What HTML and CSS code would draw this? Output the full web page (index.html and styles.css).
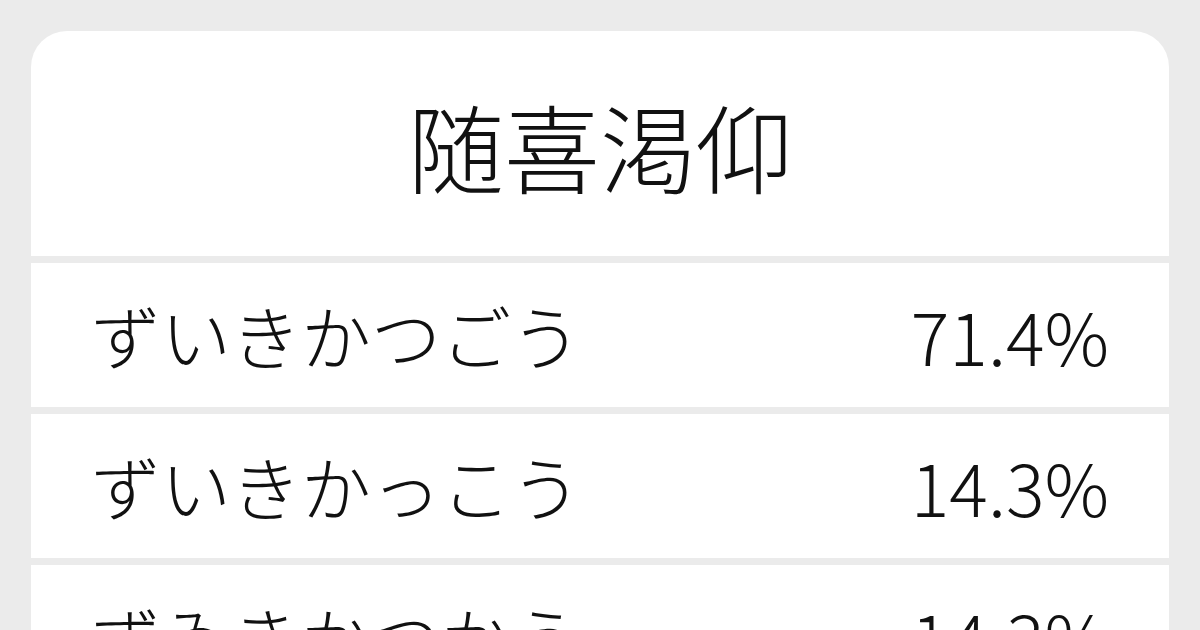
FILE: index.html
```html
<!DOCTYPE html>
<html lang="ja">
<head>
<meta charset="utf-8">
<link rel="stylesheet" href="styles.css">
</head>
<body>
<div class="card">
  <div class="header"><h1 class="title">随喜渇仰</h1></div>
  <div class="row"><span class="reading">ずいきかつごう</span><span class="pct">71.4%</span></div>
  <div class="row"><span class="reading">ずいきかっこう</span><span class="pct">14.3%</span></div>
  <div class="row"><span class="reading">ずゐきかつかう</span><span class="pct">14.3%</span></div>
</div>
</body>
</html>
```
FILE: styles.css
```css
html, body {
  margin: 0;
  padding: 0;
  background: #ebebeb;
  width: 1200px;
  height: 630px;
  overflow: hidden;
}
body {
  padding: 31px 31px 0 31px;
  box-sizing: border-box;
  font-family: "Noto Sans CJK JP", "Noto Sans", sans-serif;
  font-weight: 300;
  color: #111;
}
.card {
  border-radius: 36px 36px 0 0;
  overflow: hidden;
  display: flex;
  flex-direction: column;
  gap: 7px;
}
.header {
  background: #fff;
  height: 225px;
  display: flex;
  align-items: center;
  justify-content: center;
}
.title {
  margin: 0;
  font-size: 96px;
  font-weight: 300;
  line-height: 1;
  padding-top: 2px;
}
.row {
  background: #fff;
  height: 144px;
  display: flex;
  align-items: center;
  justify-content: space-between;
  padding: 0 60px 0 60px;
  font-size: 70px;
  line-height: 1;
  flex-shrink: 0;
}
.pct {
  font-size: 72px;
}
```
